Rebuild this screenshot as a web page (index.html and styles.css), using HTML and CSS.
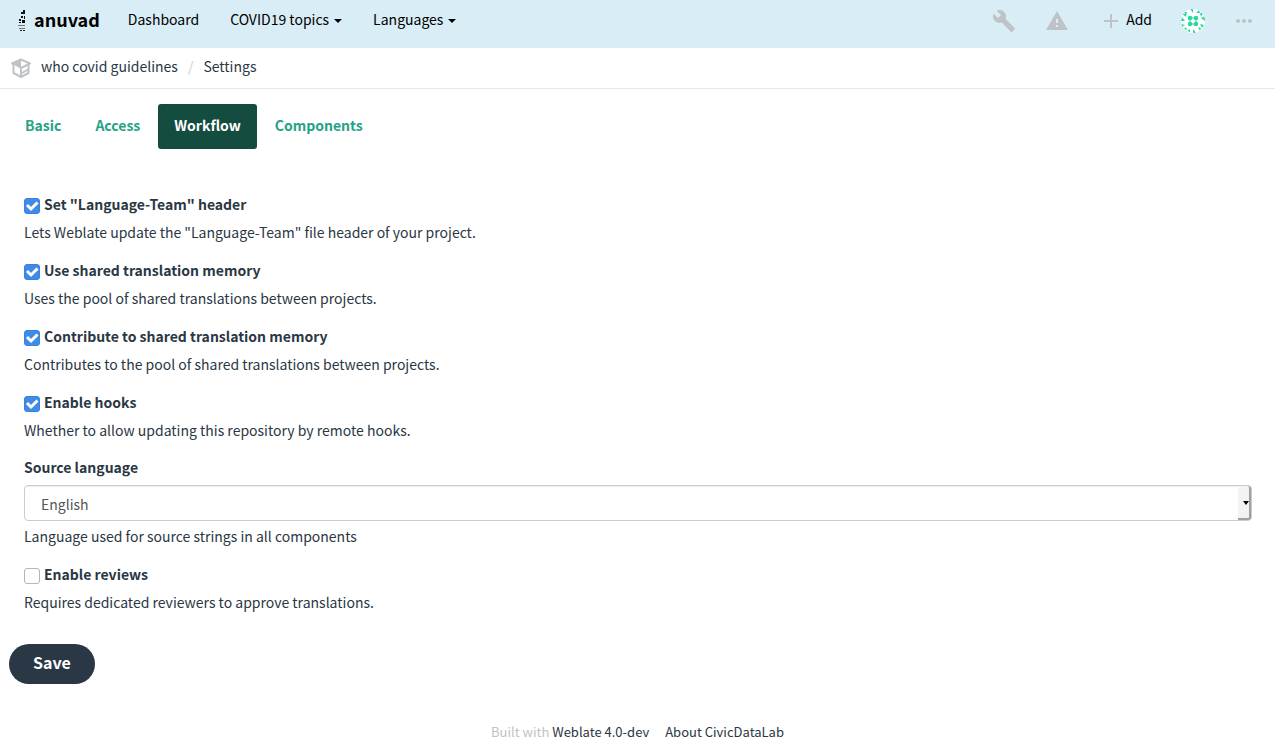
FILE: index.html
```html
<!DOCTYPE html>
<html lang="en">
<head>
<meta charset="utf-8">
<title>Settings - who covid guidelines</title>
<link rel="stylesheet" href="styles.css">
</head>
<body>
<header class="navbar">
  <a class="brand" href="#">
    <svg class="brand-mark" viewBox="0 0 8 22" aria-hidden="true">
      <path d="M5 0h2v4H5zM3 2h2v2H3zM3 6h2v2H3zM6 6h1v3H6zM1 9h2v2H1zM4 10h3v3H4zM1 12h2v1H1z" fill="#111"/>
      <path d="M0 15.500h7M1 18.500h6" stroke="#777" fill="none"/>
      <path d="M2 20h2v1H2zM5 20h2v1H5z" fill="#222"/>
    </svg>
    <span class="nav-text">anuvad</span>
  </a>
  <nav class="main-nav">
    <a class="nav-text" href="#">Dashboard</a>
    <a class="nav-text" href="#">COVID19 topics<span class="caret"></span></a>
    <a class="nav-text" href="#">Languages<span class="caret"></span></a>
  </nav>
  <div class="tools">
    <a href="#" aria-label="Manage"><svg width="24" height="24" viewBox="0 0 24 24"><path fill="#bfc3c7" d="M22.7 19l-9.1-9.1c.9-2.3.4-5-1.5-6.9-2-2-5-2.4-7.4-1.3L9 6 6 9 1.6 4.7C.4 7.1.9 10.1 2.9 12.100c1.900 1.900 4.600 2.400 6.900 1.500l9.100 9.100c.4.4 1 .4 1.400 0l2.300-2.300c.5-.4.5-1.100.1-1.400z"/></svg></a>
    <a href="#" aria-label="Warnings"><svg width="24" height="24" viewBox="0 0 24 24"><path fill="#bfc3c7" d="M1 21h22L12 2 1 21zm12-3h-2v-2h2v2zm0-4h-2v-4h2v4z"/></svg></a>
    <a class="add" href="#"><svg width="14" height="14" viewBox="0 0 14 14" aria-hidden="true"><path stroke="#bfc3c7" stroke-width="2" d="M7 0v14M0 7h14"/></svg><span class="nav-text">Add</span></a>
    <a href="#" aria-label="Profile"><svg width="24" height="24" viewBox="0 0 24 24">
      <defs><clipPath id="round"><circle cx="12" cy="12" r="12"/></clipPath></defs>
      <g clip-path="url(#round)"><path fill="#fff" d="M0 0h24v24H0z"/>
      <g fill="#26dc9b"><circle cx="9" cy="9" r="2.300"/><circle cx="15" cy="9" r="2.300"/><circle cx="9" cy="15" r="2.300"/><circle cx="15" cy="15" r="2.300"/><path d="M9 8.500h6v1H9zM9 14.500h6v1H9zM8.500 9h1v6h-1zM14.500 9h1v6h-1z"/>
      <path d="M3 3l3 0-1 4zM9 0h3v4zM15 4l3-3 1 3zM19 4h3l-2 4zM20 9l4-2v5zM19 15l4 1-2 3zM17 18l3 1-1 3zM12 20l3 4h-3zM9 20v3l-3-1zM5 18l1 3-3-1zM0 15l4 1-3 2zM1 8l3 4H0zM1 5h4v3z"/></g></g></svg></a>
    <a href="#" aria-label="More"><svg width="20" height="24" viewBox="0 0 20 24"><g fill="#bfc3c7"><circle cx="4" cy="12" r="2"/><circle cx="10" cy="12" r="2"/><circle cx="16" cy="12" r="2"/></g></svg></a>
  </div>
</header>
<nav class="breadcrumb" aria-label="Breadcrumb">
  <svg width="22" height="22" viewBox="0 0 22 22" aria-hidden="true"><g fill="none" stroke="#bfc3c7" stroke-width="2" stroke-linejoin="round"><path d="M11 2.500l9 4-1.500 1V16L11 20l-7.500-4V7.500L2 6.500zM11 11v9M11 11l8-4M12 16l7-4"/></g><path fill="#bfc3c7" d="M2 6.500l9-4V12z"/></svg>
  <a href="#">who covid guidelines</a><span class="slash">/</span><a href="#">Settings</a>
</nav>
<main class="content">
  <nav class="tabs">
    <a href="#">Basic</a><a href="#">Access</a><a class="active" href="#" aria-current="page">Workflow</a><a href="#">Components</a>
  </nav>
  <form>
    <div class="fields">
      <div class="field">
        <label class="check"><input type="checkbox" checked>Set "Language-Team" header</label>
        <p>Lets Weblate update the "Language-Team" file header of your project.</p>
      </div>
      <div class="field">
        <label class="check"><input type="checkbox" checked>Use shared translation memory</label>
        <p>Uses the pool of shared translations between projects.</p>
      </div>
      <div class="field">
        <label class="check"><input type="checkbox" checked>Contribute to shared translation memory</label>
        <p>Contributes to the pool of shared translations between projects.</p>
      </div>
      <div class="field">
        <label class="check"><input type="checkbox" checked>Enable hooks</label>
        <p>Whether to allow updating this repository by remote hooks.</p>
      </div>
      <div class="field">
        <label class="title" for="language">Source language</label>
        <div class="select-box"><select id="language"><option>English</option></select></div>
        <p>Language used for source strings in all components</p>
      </div>
      <div class="field">
        <label class="check"><input type="checkbox">Enable reviews</label>
        <p>Requires dedicated reviewers to approve translations.</p>
      </div>
    </div>
    <button class="save" type="submit">Save</button>
  </form>
</main>
<footer class="footer">
  <span>Built with <a href="#">Weblate 4.0-dev</a></span>
  <a href="#">About CivicDataLab</a>
</footer>
</body>
</html>
```
FILE: styles.css
```css
* { box-sizing: border-box; }
body {
  margin: 0;
  background: #fff;
  color: #2a3744;
  font: 14px/20px "Noto Sans CJK SC", "Noto Sans", sans-serif;
}
a { color: inherit; text-decoration: none; }
p { margin: 0; }
.navbar {
  display: flex;
  align-items: center;
  height: 48px;
  padding: 0 21px 6px 18px;
  background: #d9edf6;
  color: #000;
}
.nav-text { padding-bottom: 4px; }
.brand { display: flex; align-items: center; gap: 8px; font-size: 18px; font-weight: 700; }
.brand-mark { width: 8px; height: 22px; }
.main-nav { display: flex; gap: 31px; margin-left: 28px; }
.caret {
  display: inline-block;
  margin-left: 5px;
  vertical-align: middle;
  border: 4px solid transparent;
  border-top-color: #000;
  border-bottom: 0;
}
.tools { display: flex; align-items: center; gap: 29px; margin-left: auto; }
.tools a { display: flex; align-items: center; }
.tools svg { display: block; }
.tools .add { gap: 8px; margin-left: 6px; }
.breadcrumb {
  display: flex;
  align-items: center;
  height: 41px;
  padding: 0 10px;
  border-bottom: 1px solid #e7e7e7;
}
.breadcrumb svg { margin-right: 9px; }
.breadcrumb a, .slash { padding-bottom: 4px; }
.slash { margin: 0 10px; color: #ccc; }
.content { padding: 15px 23px 0 9px; }
.tabs { display: flex; gap: 2px; color: #26a287; font-weight: 700; }
.tabs a { padding: 11px 16px 14px; border-radius: 3px; }
.tabs .active { background: #144d3f; color: #fff; }
.fields { padding: 41px 0 0 15px; }
.field { margin-bottom: 10px; }
.check { display: flex; align-items: center; gap: 4px; height: 28px; font-weight: 700; }
.check input {
  appearance: none;
  width: 16px;
  height: 16px;
  margin: 4px 0 0;
  border: 1px solid #bab5b0;
  border-radius: 3px;
  background: #fff;
}
.check input:checked {
  border-color: #3584e4;
  background: #3f8be5 url("data:image/svg+xml,%3Csvg xmlns='http://www.w3.org/2000/svg' viewBox='0 0 14 14'%3E%3Cpath d='M2 6l4 4 6.500-6.500' fill='none' stroke='white' stroke-width='3'/%3E%3C/svg%3E");
}
.field p { line-height: 28px; }
.title { display: block; line-height: 26px; font-weight: 700; }
.select-box { position: relative; margin: 5px 0 1px; }
.select-box::after {
  content: "";
  position: absolute;
  inset: 1px 1px 1px auto;
  width: 11px;
  border-right: 2px solid #a0a0a0;
  border-bottom: 2px solid #a0a0a0;
  border-radius: 0 3px 3px 0;
  background: #f4f3f2;
  pointer-events: none;
}
.select-box::before {
  content: "";
  position: absolute;
  z-index: 1;
  top: 16px;
  right: 3px;
  border: 3px solid transparent;
  border-top: 4px solid #000;
  border-bottom: 0;
  pointer-events: none;
}
select {
  appearance: none;
  display: block;
  width: 100%;
  height: 36px;
  padding: 1px 16px 0;
  border: 1px solid #ccc;
  border-radius: 4px;
  background: #fff;
  box-shadow: inset 0 1px 1px rgba(0, 0, 0, 0.075);
  color: #555;
  font: inherit;
}
.save {
  display: block;
  height: 40px;
  margin-top: 28px;
  padding: 0 24px 4px;
  border: 0;
  border-radius: 20px;
  background: #2a3744;
  color: #fff;
  font: inherit;
  font-size: 16px;
  font-weight: 700;
}
.footer {
  display: flex;
  justify-content: center;
  gap: 16px;
  padding-top: 38px;
  color: #bfc3c7;
  font-size: 13px;
}
.footer a { color: #2a3744; }
```
